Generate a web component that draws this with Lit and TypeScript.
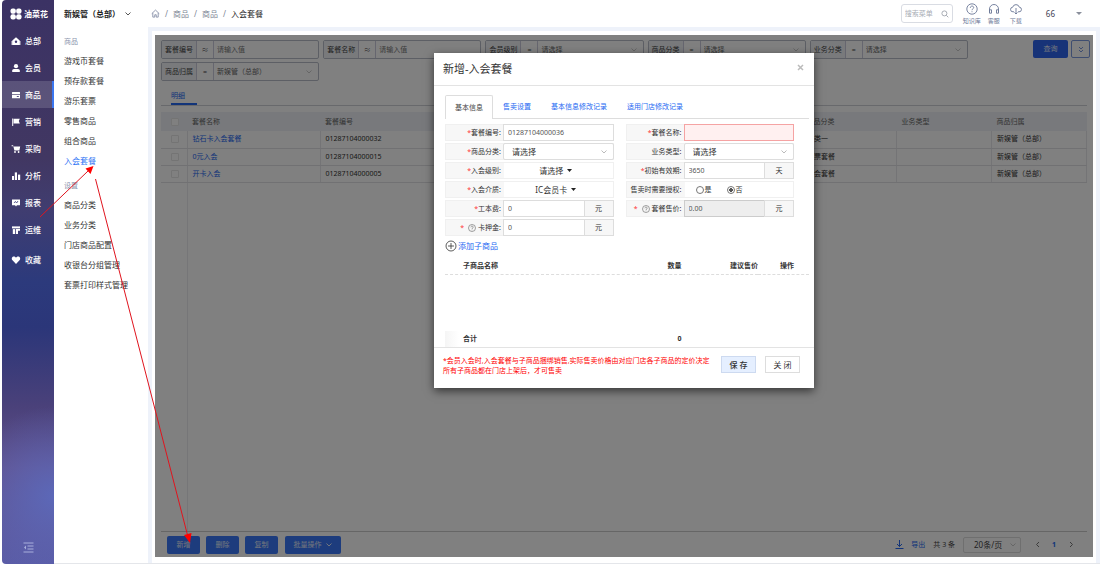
import { LitElement, html, css, svg, nothing } from "lit";
import { customElement } from "lit/decorators.js";
import { classMap } from "lit/directives/class-map.js";

const navIcons: Record<string, unknown> = {
  home: svg`<path d="M5 1.2 1.3 4.4V9h7.4V4.4Z"/><path d="M0.6 5v4h1V5ZM8.4 5v4h1V5Z"/><circle cx="5" cy="5.8" r="1.2" fill="#3c3570"/>`,
  user: svg`<circle cx="5" cy="3.2" r="2.1"/><path d="M1.2 9V7.4Q1.2 6.2 3 6h4q1.8.2 1.8 1.4V9Z"/>`,
  card: svg`<rect x="1" y="2" width="8" height="2" rx=".5"/><path d="M1 4.8h8v3.4H1Z"/><path d="M5.8 6h2v1h-2Z" fill="#5a5387"/>`,
  flag: svg`<path d="M1.2 1.5h1V9h-1ZM2.600 1.800h6.200L7.800 4l1 2.400H2.600Z"/>`,
  cart: svg`<path d="M.6 1.200h1.500l.4 1.200h6.700L8.400 6.400H3.400L2.300 2.200H.6Z"/><circle cx="4" cy="8" r=".9"/><circle cx="7.600" cy="8" r=".9"/>`,
  bars: svg`<rect x="1" y="5" width="2" height="4"/><rect x="3.800" y="1.400" width="2.200" height="7.600"/><rect x="7" y="3.600" width="2.200" height="5.400"/>`,
  board: svg`<path d="M1 1.400h8v5.800H6l-1 1.200-1-1.200H1Z"/><path d="m3 5 1.400-1.600L5.600 5 7 3" fill="none" stroke="#3c3c7c" stroke-width=".8"/>`,
  layout: svg`<rect x="1" y="1.400" width="8" height="2"/><rect x="1.800" y="4.100" width="2.200" height="4.900"/><path d="M4.800 4.100h4.200v1.600H7V9H4.800Z"/>`,
  heart: svg`<path d="M5 9 1.500 5.300C0 3.400 1.200 1.400 2.900 1.400 4 1.400 4.600 2 5 2.700 5.400 2 6 1.400 7.100 1.400 8.800 1.400 10 3.400 8.500 5.300Z"/>`,
};

const nav: [string, string][] = [
  ["home", "总部"], ["user", "会员"], ["card", "商品"], ["flag", "营销"], ["cart", "采购"],
  ["bars", "分析"], ["board", "报表"], ["layout", "运维"], ["heart", "收藏"],
];
const menus = [
  { title: "商品", items: ["游戏币套餐", "预存款套餐", "游乐套票", "零售商品", "组合商品", "入会套餐"] },
  { title: "设置", items: ["商品分类", "业务分类", "门店商品配置", "收银台分组管理", "套票打印样式管理"] },
];
const filters = [
  { id: "code", label: "套餐编号", op: "≈", value: "请输入值", select: false },
  { id: "name", label: "套餐名称", op: "≈", value: "请输入值", select: false },
  { id: "level", label: "会员级别", op: "=", value: "请选择", select: true },
  { id: "category", label: "商品分类", op: "=", value: "请选择", select: true },
  { id: "biz", label: "业务分类", op: "=", value: "请选择", select: true },
  { id: "owner", label: "商品归属", op: "=", value: "新娱管（总部）", select: true },
];
const rows = [
  { name: "钻石卡入会套餐", code: "01287104000032", category: "分类一" },
  { name: "0元入会", code: "01287104000015", category: "门票套餐" },
  { name: "开卡入会", code: "01287104000005", category: "入会套餐" },
];

const chevron = html`<svg class="chevron" viewBox="0 0 8 6"><path d="m1.500 1.500 2.500 2.500 2.500-2.500" /></svg>`;

const base = css`
  * { box-sizing: border-box; }
  a { text-decoration: none; color: inherit; }
  button, input, select {
    font: inherit; color: inherit; margin: 0; padding: 0; min-width: 0;
    border: 0; background: none; border-radius: 0; appearance: none; outline: 0;
  }
  ul { list-style: none; margin: 0; padding: 0; }
  svg { display: block; flex: none; }
  .chevron { width: 8px; height: 6px; fill: none; stroke: currentColor; stroke-width: 1; }
`;

@customElement("side-nav")
export class SideNav extends LitElement {
  static styles = [base, css`
    :host {
      display: flex; flex-direction: column; width: 52px; flex: none; color: #fff;
      border-radius: 4px 0 0 4px; overflow: hidden;
      background:
        radial-gradient(circle at 100% 88%, #5c68b8 0, #5c68b800 90px),
        linear-gradient(#3b3264 0, #413762 28%, #403d70 37%, #2c3a7c 50%, #2b3679 58%, #4a417a 72%, #62518c 83%, #5a5ba5 100%);
    }
    .logo { display: flex; align-items: center; gap: 2px; height: 27px; padding-left: 8px; font-size: 8px; font-weight: 700; }
    .logo svg { width: 12px; height: 12px; fill: #fff; }
    a { display: flex; align-items: center; gap: 4px; height: 27px; padding-left: 9px; font-size: 8px; font-weight: 500; }
    a svg { width: 10px; height: 10px; fill: #fff; }
    .on { background: #ffffff26; border-right: 2px solid #3a76f0; }
    .fav { margin-top: 3px; }
    button { margin: auto auto 11px; height: 11px; }
    button svg { width: 11px; height: 11px; stroke: #a9afdc; fill: #a9afdc; }
  `];
  render() {
    return html`
      <div class="logo">
        <svg viewBox="0 0 12 12"><rect x=".5" y=".5" width="5.300" height="5.300" rx="2" /><rect x="6.200" y=".5" width="5.300" height="5.300" rx="2" /><rect x=".5" y="6.200" width="5.300" height="5.300" rx="2" /><rect x="6.200" y="6.200" width="5.300" height="5.300" rx="2" /></svg>
        油菜花
      </div>
      ${nav.map(([icon, text]) => html`
        <a href="#" class=${classMap({ on: icon === "card", fav: icon === "heart" })}><svg viewBox="0 0 10 10">${navIcons[icon]}</svg>${text}</a>`)}
      <button aria-label="收起"><svg viewBox="0 0 11 11"><path d="M.5 1h10M4.500 4h6M4.500 7h6M.5 10h10" /><path d="M3 3.600v3.800L1 5.500Z" stroke="none" /></svg></button>`;
  }
}

@customElement("top-bar")
export class TopBar extends LitElement {
  static styles = [base, css`
    :host { display: flex; align-items: center; height: 27px; font-size: 8px; color: #222; }
    .store { display: flex; align-items: center; gap: 4px; width: 97px; padding-left: 10px; font-weight: 700; font-size: 8px; white-space: nowrap; }
    .store .chevron { color: #555; }
    nav { display: flex; align-items: center; gap: 5px; flex: 1; color: #7d8694; }
    nav svg { width: 9px; height: 9px; fill: none; stroke: #8790a8; }
    nav b { font-weight: 400; color: #222; }
    .search { display: flex; align-items: center; width: 52px; height: 19px; padding: 0 3px; border: 1px solid #d9dce3; border-radius: 3px; }
    .search input { flex: 1; width: 20px; font-size: 7px; }
    .search input::placeholder { color: #a9adb5; }
    .search svg { width: 8px; height: 8px; fill: none; stroke: #a9adb5; }
    .links { display: flex; margin-left: 8px; color: #6b7796; }
    .links a { display: flex; flex-direction: column; align-items: center; gap: 2px; width: 22px; font-size: 6px; line-height: 8px; }
    .links svg { width: 12px; height: 12px; fill: none; stroke: #6b7796; stroke-width: .9; }
    .user { margin-left: 19px; color: #445; }
    .caret { width: 6px; height: 3px; margin: 0 18px 0 21px; fill: #8a8f9c; }
  `];
  render() {
    return html`
      <button class="store"><span>新娱管（总部）</span>${chevron}</button>
      <nav>
        <svg viewBox="0 0 10 10"><path d="M.8 5.200 5 1.200l4.200 4M2 4.400V9h2.200V6.400h1.600V9H8V4.400" /></svg>
        <span>/</span><a href="#">商品</a><span>/</span><a href="#">商品</a><span>/</span><b>入会套餐</b>
      </nav>
      <label class="search"><input placeholder="搜索菜单" aria-label="搜索菜单" /><svg viewBox="0 0 8 8"><circle cx="3.400" cy="3.400" r="2.500" /><path d="m5.300 5.300 2 2" /></svg></label>
      <div class="links">
        <a href="#"><svg viewBox="0 0 12 12"><circle cx="6" cy="6" r="5.200" /><path d="M4.300 4.800c0-2.300 3.400-2.200 3.400-.2C7.700 5.800 6 5.800 6 7.200M6 8.300v.9" /></svg>知识库</a>
        <a href="#"><svg viewBox="0 0 12 12"><path d="M1.500 9.500V6a4.500 4.500 0 0 1 9 0v3.500M1.500 6.800h2v3.400h-2ZM8.500 6.800h2v3.400h-2Z" /></svg>客服</a>
        <a href="#"><svg viewBox="0 0 12 12"><path d="M4 8.800H3A2.300 2.300 0 0 1 2.700 4.200a3.400 3.400 0 0 1 6.600 0A2.300 2.300 0 0 1 9 8.800H8M6 5v6M4.500 9.500 6 11l1.500-1.500" /></svg>下载</a>
      </div>
      <span class="user">66</span>
      <svg class="caret" viewBox="0 0 6 3"><path d="M0 0h6L3 3Z" /></svg>`;
  }
}

@customElement("package-dialog")
export class PackageDialog extends LitElement {
  static styles = [base, css`
    :host { display: block; width: 380px; background: #fff; color: #333; font-size: 7px; line-height: 10px; box-shadow: 0 3px 9px #0009; }
    header { display: flex; align-items: center; justify-content: space-between; height: 33px; padding: 0 10px 0 9px; border-bottom: 1px solid #e3e3e3; }
    h2 { margin: 0; font-size: 11px; line-height: 16px; font-weight: 400; }
    .x { padding-bottom: 3px; }
    .x svg { width: 7px; height: 7px; stroke: #bbb; stroke-width: 1.500; fill: none; }
    .tabs { display: flex; margin: 9px 5px 0 11px; border-bottom: 1px solid #ddd; }
    .tabs button { height: 23px; padding: 0 10px; color: #2468f2; }
    .tabs .on { color: #444; border: 1px solid #ddd; border-bottom: 0; background: #fff; padding: 0 9px; margin-bottom: -1px; height: 24px; border-radius: 2px 2px 0 0; }
    .form { display: grid; grid-template-columns: 1fr 1fr; gap: 2px 12px; margin: 5px 20px 0 11px; }
    .field { display: flex; height: 17px; border: 1px solid #f0f0f0; }
    .field > .lab { display: flex; align-items: center; justify-content: flex-end; gap: 2px; width: 58px; flex: none; padding-right: 3px; background: #f7f7f7; white-space: nowrap; }
    .lab i { font-style: normal; color: #f33; }
    .lab i + svg { margin-left: 2px; }
    .lab span { display: flex; }
    .lab svg { width: 8px; height: 8px; fill: none; stroke: #777; stroke-width: .7; }
    .box { display: flex; align-items: center; flex: 1; min-width: 0; }
    .text { align-self: stretch; border: 1px solid #ddd; margin: -1px; width: 0; flex: 1; padding: 0 4px; color: #555; }
    .text:disabled { background: #eee; border-color: #ccc; }
    .bad { border-color: #f5a3a3; background: #fff0f0; }
    .unit { display: flex; align-items: center; justify-content: center; width: 30px; margin: -1px -1px -1px 0; border: 1px solid #ddd; background: #f7f7f7; align-self: stretch; }
    .sel { display: flex; align-items: center; flex: 1; margin: -1px; border: 1px solid #ddd; align-self: stretch; border-radius: 2px; }
    .sel select { flex: 1; font-size: 8px; padding-left: 8px; }
    .sel .chevron { color: #bbb; margin-right: 5px; }
    .drop { flex: 1; display: flex; align-items: center; justify-content: center; gap: 4px; font-size: 8px; padding-right: 5px; }
    .drop svg { width: 5px; height: 3px; fill: #222; }
    .radios { gap: 15px; padding-left: 11px; }
    .radios label { display: flex; align-items: center; gap: 1px; }
    .radios input { width: 8px; height: 8px; border: 1px solid #777; border-radius: 50%; background: #fff; }
    .radios input:checked { background: radial-gradient(circle, #555 0 2px, #fff 2px); }
    .add { display: flex; align-items: center; gap: 1px; height: 20px; margin-left: 11px; color: #2468f2; font-size: 8px; }
    .add svg { width: 12px; height: 12px; fill: none; stroke: #333; stroke-width: .8; }
    .items { margin: 2px 5px 0 11px; }
    table { width: 100%; border-collapse: collapse; table-layout: fixed; }
    th, td { padding: 0; font-weight: 700; color: #333; text-align: right; height: 16px; }
    thead th { border-bottom: 1px dashed #ddd; }
    th:first-child, tfoot th { text-align: left; padding-left: 18px; }
    .c1 { width: 55%; } .c2 { width: 10%; } .c3 { width: 21%; } .c4 { width: 14%; }
    thead th:last-child { padding-right: 15px; }
    .blank td { height: 57px; }
    tfoot th { background: linear-gradient(90deg, #f5f5f5, #fff) left / 14px no-repeat; }
    footer { display: flex; gap: 9px; height: 41px; padding: 8px 14px 0 9px; border-top: 1px solid #e3e3e3; }
    footer p { flex: 1; margin: 0; color: #f00; white-space: nowrap; }
    footer button { width: 35px; height: 17px; border: 1px solid #ddd; font-size: 8px; }
    footer .save { background: #e5efff; border-color: #cddaf0; font-weight: 500; }
  `];

  private label(id: string, text: string, required = true, help = false) {
    return html`<label class="lab" for=${id}>${help
      ? html`<i>*</i><svg viewBox="0 0 8 8"><circle cx="4" cy="4" r="3.500" /><path d="M2.900 3.300c0-1.600 2.300-1.500 2.300-.1C5.200 4 4 4 4 5M4 5.600v.6" /></svg><span>${text}:</span>`
      : html`<span>${required ? html`<i>*</i>` : nothing}${text}:</span>`}</label>`;
  }
  private select(id: string) {
    return html`<div class="box"><div class="sel"><select id=${id}><option>请选择</option></select>${chevron}</div></div>`;
  }
  private drop(id: string, text: string) {
    return html`<div class="box"><button class="drop" id=${id}>${text}<svg viewBox="0 0 5 3"><path d="M0 0h5L2.500 3Z" /></svg></button></div>`;
  }
  private amount(id: string, value: string, unit: string, disabled = false) {
    return html`<div class="box"><input class="text" id=${id} .value=${value} ?disabled=${disabled} /><span class="unit">${unit}</span></div>`;
  }

  render() {
    return html`
      <header><h2>新增-入会套餐</h2><button class="x" aria-label="关闭"><svg viewBox="0 0 7 7"><path d="m1 1 5 5M6 1 1 6" /></svg></button></header>
      <div class="tabs"><button class="on">基本信息</button><button>售卖设置</button><button>基本信息修改记录</button><button>适用门店修改记录</button></div>
      <div class="form">
        <div class="field">${this.label("no", "套餐编号")}<input class="text" id="no" value="01287104000036" /></div>
        <div class="field">${this.label("nm", "套餐名称")}<input class="text bad" id="nm" /></div>
        <div class="field">${this.label("cat", "商品分类")}${this.select("cat")}</div>
        <div class="field">${this.label("type", "业务类型", false)}${this.select("type")}</div>
        <div class="field">${this.label("lvl", "入会级别")}${this.drop("lvl", "请选择")}</div>
        <div class="field">${this.label("days", "初始有效期")}${this.amount("days", "3650", "天")}</div>
        <div class="field">${this.label("media", "入会介质")}${this.drop("media", "IC会员卡")}</div>
        <div class="field">${this.label("yes", "售卖时需要授权", false)}
          <div class="box radios"><label><input type="radio" name="auth" id="yes" />是</label><label><input type="radio" name="auth" checked />否</label></div>
        </div>
        <div class="field">${this.label("cost", "工本费")}${this.amount("cost", "0", "元")}</div>
        <div class="field">${this.label("price", "套餐售价", true, true)}${this.amount("price", "0.00", "元", true)}</div>
        <div class="field">${this.label("deposit", "卡押金", true, true)}${this.amount("deposit", "0", "元")}</div>
      </div>
      <button class="add"><svg viewBox="0 0 12 12"><circle cx="6" cy="6" r="5" /><path d="M6 3v6M3 6h6" /></svg>添加子商品</button>
      <div class="items"><table>
        <colgroup><col class="c1" /><col class="c2" /><col class="c3" /><col class="c4" /></colgroup>
        <thead><tr><th>子商品名称</th><th>数量</th><th>建议售价</th><th>操作</th></tr></thead>
        <tbody><tr class="blank"><td colspan="4"></td></tr></tbody>
        <tfoot><tr><th>合计</th><td>0</td><td></td><td></td></tr></tfoot>
      </table></div>
      <footer>
        <p>*会员入会时,入会套餐与子商品捆绑销售,实际售卖价格由对应门店各子商品的定价决定<br />所有子商品都在门店上架后，才可售卖</p>
        <button class="save">保 存</button><button>关 闭</button>
      </footer>`;
  }
}

@customElement("package-list")
export class PackageList extends LitElement {
  static styles = [base, css`
    :host { position: relative; display: flex; flex-direction: column; overflow: hidden; background: #fff; color: #444; font-size: 7px; line-height: 10px; padding: 5px 3px 0 6px; }
    .query { display: flex; align-items: flex-start; gap: 3px; }
    .filters { display: grid; grid-template-columns: repeat(5, 1fr); gap: 3px 4px; flex: 1; padding-right: 62px; }
    .filter { display: flex; height: 19px; border: 1px solid #b9bec9; border-radius: 2px; align-items: stretch; }
    .filter label { display: flex; align-items: center; justify-content: center; width: 35px; background: #f2f4f8; border-right: 1px solid #ccd; }
    .filter span { display: flex; align-items: center; justify-content: center; width: 17px; border-right: 1px solid #ccd; }
    .filter input, .filter select { flex: 1; width: 0; padding-left: 3px; color: #666; }
    .filter input::placeholder { color: #777; }
    .filter .chevron { align-self: center; margin-right: 5px; color: #ccc; }
    .btn { width: 33px; height: 18px; background: #3a78fa; color: #e4ebfa; border-radius: 2px; font-size: 7px; }
    .query .btn { width: 35px; background: #2f66f0; }
    .more { display: grid; place-items: center; width: 19px; height: 18px; border: 1px solid #7d9ae0; border-radius: 2px; color: #7d9ae0; }
    .more svg { width: 6px; height: 7px; fill: none; stroke: currentColor; }
    .tabs { margin: 7px 3px 0 0; border-bottom: 1px solid #cfd2d8; display: flex; padding-left: 10px; }
    .tabs a { width: 26px; height: 17px; padding-top: 3px; color: #2468f2; border-bottom: 2px solid #2468f2; }
    .grid { flex: 1; margin: 6px 3px 0 0; background: linear-gradient(#ececf0, #ececf0) 26px 0 / 1px 100% no-repeat; }
    table { width: 100%; border-collapse: collapse; table-layout: fixed; color: #333; }
    th { height: 19px; padding: 0 0 0 5px; background: #eff2f7; font-weight: 400; text-align: left; color: #666; }
    td { height: 17px; padding: 0 0 0 5px; border-right: 1px solid #e8e8ec; border-bottom: 1px solid #e2e2e6; }
    td a { color: #2468f2; }
    .k0 { width: 26px; } .k1 { width: 133px; } .k2 { width: 133px; } .k4, .k5, .k6 { width: 95px; }
    th input, td input { display: block; width: 8px; height: 8px; margin-left: 5px; border: 1px solid #e8e8e8; background: #fff; border-radius: 1px; }
    footer { display: flex; align-items: center; height: 26px; margin: 0 3px 0 0; padding: 0 13px 0 6px; border-top: 1px solid #ccc; gap: 6px; }
    .batch { display: flex; align-items: center; justify-content: center; gap: 3px; width: 56px; margin-left: 1px; }
    .right { display: flex; align-items: center; margin-left: auto; gap: 8px; }
    .export { display: flex; align-items: center; gap: 7px; color: #2468f2; }
    .export svg { width: 9px; height: 9px; fill: none; stroke: currentColor; }
    .size { display: flex; align-items: center; width: 58px; height: 16px; border: 1px solid #ddd; border-radius: 2px; padding: 0 3px 0 10px; }
    .size select { flex: 1; font-size: 8px; }
    .size .chevron { color: #ccc; }
    .pager { display: flex; gap: 11px; padding-left: 5px; color: #777; }
    .pager button { width: 6px; display: grid; place-items: center; }
    .pager svg { width: 5px; height: 7px; fill: none; stroke: currentColor; }
    .pager .cur { color: #2468f2; font-weight: 700; }
    .mask { position: absolute; inset: 0; display: flex; justify-content: center; align-items: flex-start; padding-top: 18px; background: #0000007f; }
  `];
  render() {
    return html`
      <div class="query">
        <div class="filters">${filters.map((f) => html`
          <div class="filter"><label for=${f.id}>${f.label}</label><span>${f.op}</span>${f.select
            ? html`<select id=${f.id}><option>${f.value}</option></select>${chevron}`
            : html`<input id=${f.id} placeholder=${f.value} />`}</div>`)}
        </div>
        <button class="btn">查询</button>
        <button class="more" aria-label="展开"><svg viewBox="0 0 6 7"><path d="m1 1 2 2 2-2M1 4l2 2 2-2" /></svg></button>
      </div>
      <div class="tabs"><a href="#">明细</a></div>
      <div class="grid"><table>
        <colgroup><col class="k0" /><col class="k1" /><col class="k2" /><col /><col class="k4" /><col class="k5" /><col class="k6" /></colgroup>
        <thead><tr><th><input type="checkbox" aria-label="全选" /></th><th>套餐名称</th><th>套餐编号</th><th></th><th>商品分类</th><th>业务类型</th><th>商品归属</th></tr></thead>
        <tbody>${rows.map((r) => html`<tr><td><input type="checkbox" aria-label=${r.name} /></td><td><a href="#">${r.name}</a></td><td>${r.code}</td><td></td><td>${r.category}</td><td></td><td>新娱管（总部）</td></tr>`)}</tbody>
      </table></div>
      <footer>
        <button class="btn">新增</button><button class="btn">删除</button><button class="btn">复制</button>
        <button class="btn batch">批量操作 ${chevron}</button>
        <div class="right">
          <a class="export" href="#"><svg viewBox="0 0 9 9"><path d="M4.500 0v6.500M2 4l2.500 2.500L7 4M.5 8.500h8" /></svg>导出</a>
          <span>共 3 条</span>
          <div class="size"><select aria-label="每页条数"><option>20条/页</option></select>${chevron}</div>
          <div class="pager">
            <button aria-label="上一页"><svg viewBox="0 0 5 7"><path d="M4 1 1.500 3.500 4 6" /></svg></button>
            <button class="cur">1</button>
            <button aria-label="下一页"><svg viewBox="0 0 5 7"><path d="m1 1 2.500 2.500L1 6" /></svg></button>
          </div>
        </div>
      </footer>
      <div class="mask"><package-dialog></package-dialog></div>`;
  }
}

@customElement("app-root")
export class AppRoot extends LitElement {
  static styles = [base, css`
    :host {
      position: relative; display: flex; height: 100vh; overflow: hidden; padding: 0 0 1px 2px; background: #fff;
      font-family: "Noto Sans", "Noto Sans CJK SC", sans-serif; font-size: 8px; line-height: 12px; color: #333;
    }
    .main { flex: 1; min-width: 0; display: flex; flex-direction: column; border-bottom: 1px solid #e4e6ea; }
    .body { flex: 1; display: flex; min-height: 0; }
    .menu { width: 94px; flex: none; padding: 5px 0 0 10px; font-size: 8px; }
    .menu h3 { margin: 0; height: 19px; line-height: 20px; font-size: 7px; font-weight: 400; color: #8b95ad; }
    .menu ul { padding-bottom: 5px; }
    .menu li { height: 20px; line-height: 20px; white-space: nowrap; }
    .menu .on { color: #2e74f5; }
    .frame { flex: 1; min-width: 0; display: flex; padding: 4px 4px 0 4px; background: #eef2fa; }
    .card { flex: 1; min-width: 0; display: flex; padding: 4px 3px 6px; background: #fff; }
    package-list { flex: 1; min-width: 0; }
    .arrows { position: absolute; left: 0; top: 0; width: 1100px; height: 564px; pointer-events: none; stroke: #e0141e; fill: #f00; }
  `];
  render() {
    return html`
      <side-nav></side-nav>
      <div class="main">
        <top-bar></top-bar>
        <div class="body">
          <div class="menu">${menus.map((m) => html`<h3>${m.title}</h3>
            <ul>${m.items.map((t) => html`<li><a href="#" class=${classMap({ on: t === "入会套餐" })}>${t}</a></li>`)}</ul>`)}
          </div>
          <div class="frame"><div class="card"><package-list></package-list></div></div>
        </div>
      </div>
      <svg class="arrows" viewBox="0 0 1100 564">
        <path d="M40 217 88 171M95.500 179 188 537" /><path d="m93.500 166-3 8-5-5.500ZM190 543l-6-8 7.500-2Z" stroke="none" />
      </svg>`;
  }
}
